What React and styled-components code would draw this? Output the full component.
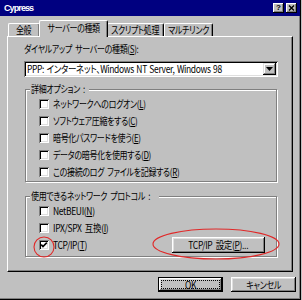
import React from "react";
import styled, { createGlobalStyle } from "styled-components";

const GlobalStyle = createGlobalStyle`
  html, body {
    margin: 0;
    padding: 0;
    background: #c0c0c0;
  }
  body {
    font-family: "Noto Sans CJK JP", "Noto Sans", sans-serif;
    font-size: 10px;
    font-feature-settings: "palt";
    letter-spacing: -0.4px;
    word-spacing: 2px;
    color: #000;
  }
`;

const Window = styled.div`
  position: relative;
  width: 301px;
  height: 300px;
  box-sizing: border-box;
  background: #c0c0c0;
  border-right: 1px solid #000;
  border-bottom: 1px solid #000;
  box-shadow: inset -1px -1px #808080;
  display: flex;
  flex-direction: column;
  overflow: hidden;
`;

const TitleBar = styled.div`
  height: 16px;
  flex: none;
  background: #000080;
  color: #fff;
  display: flex;
  align-items: center;
  justify-content: space-between;
  padding: 0 3px 0 4px;
`;

const TitleText = styled.span`
  font-family: "Liberation Sans", Arial, sans-serif;
  font-weight: bold;
  font-size: 9px;
  letter-spacing: -0.9px;
`;

const TitleButtons = styled.div`
  display: flex;
  gap: 2px;
`;

const TitleButton = styled.div`
  width: 11px;
  height: 10px;
  box-sizing: border-box;
  background: #c0c0c0;
  box-shadow: inset -1px -1px #000, inset 1px 1px #fff, inset -2px -2px #808080;
  color: #000;
  display: flex;
  align-items: center;
  justify-content: center;
  font-family: "Liberation Sans", Arial, sans-serif;
  font-weight: bold;
  font-size: 8px;
  line-height: 1;
  letter-spacing: 0;
`;

// MS UI Gothic in the shot is narrower than Noto; squeeze each run of text.
const Txt = styled.span`
  display: inline-block;
  white-space: nowrap;
  transform: scaleX(${(p) => p.$s || 0.8});
  transform-origin: ${(p) => (p.$center ? "center" : "left")} center;
  margin-right: ${(p) => p.$trim || 0}px;
`;

const TabRow = styled.div`
  flex: none;
  display: flex;
  align-items: flex-end;
  height: 16px;
  margin-top: 4px;
  padding-left: 8px;
`;

const Tab = styled.div`
  position: relative;
  z-index: ${(p) => (p.$active ? 2 : 1)};
  width: ${(p) => p.$w}px;
  height: ${(p) => (p.$active ? 17 : 13)}px;
  margin: 0 ${(p) => (p.$active ? -1 : 0)}px ${(p) => (p.$active ? -1 : 0)}px;
  box-sizing: border-box;
  background: #c0c0c0;
  border-top: 1px solid #fff;
  border-left: 1px solid #fff;
  border-right: 1px solid #000;
  border-radius: 2px 2px 0 0;
  box-shadow: inset -1px 0 #808080;
  display: flex;
  align-items: ${(p) => (p.$active ? "flex-start" : "center")};
  padding-top: ${(p) => (p.$active ? 1 : 0)}px;
  justify-content: center;
  line-height: 12px;
  white-space: nowrap;
`;

const Panel = styled.div`
  flex: none;
  height: 236px;
  margin: 0 7px 0 7px;
  box-sizing: border-box;
  border-top: 1px solid #fff;
  border-left: 1px solid #fff;
  border-right: 1px solid #000;
  border-bottom: 1px solid #000;
  box-shadow: inset -1px -1px #808080;
  padding: 6px 0 0 16px;
`;

const FieldLabel = styled.div`
  line-height: 12px;
  white-space: nowrap;
`;

const Select = styled.div`
  margin-top: 6px;
  width: 254px;
  height: 16px;
  box-sizing: border-box;
  background: #fff;
  box-shadow: inset 1px 1px #808080, inset -1px -1px #fff, inset 2px 2px #000,
    inset -2px -2px #dfdfdf;
  display: flex;
  align-items: center;
  padding: 2px 2px 2px 3px;
  white-space: nowrap;
  line-height: 12px;
`;

const SelectText = styled.span`
  flex: 1;
  min-width: 0;
  word-spacing: 1px;
`;

const ArrowButton = styled.div`
  flex: none;
  width: 13px;
  height: 12px;
  box-sizing: border-box;
  background: #c0c0c0;
  box-shadow: inset -1px -1px #000, inset 1px 1px #dfdfdf, inset -2px -2px #808080,
    inset 2px 2px #fff;
  display: flex;
  align-items: center;
  justify-content: center;
`;

const Group = styled.fieldset`
  margin: ${(p) => p.$mt}px 0 0 1px;
  width: 252px;
  box-sizing: border-box;
  border: 1px solid #808080;
  box-shadow: inset 1px 1px #fff, 1px 1px #fff;
  padding: 0 0 ${(p) => p.$pb}px 0;
  min-width: 0;
`;

const Legend = styled.legend`
  margin-left: 4px;
  padding: 0 1px;
  line-height: 12px;
  background: #c0c0c0;
  white-space: nowrap;
`;

const CheckRow = styled.div`
  display: flex;
  align-items: center;
  height: 17px;
  padding: 0 11px 0 13px;
  gap: 4px;
  line-height: 12px;
  white-space: nowrap;
`;

const Box = styled.span`
  flex: none;
  width: 10px;
  height: 10px;
  box-sizing: border-box;
  background: #fff;
  box-shadow: inset 1px 1px #808080, inset -1px -1px #fff, inset 2px 2px #000,
    inset -2px -2px #dfdfdf;
  display: flex;
  align-items: center;
  justify-content: center;
`;

const Key = styled.u`
  text-decoration: underline;
  text-underline-offset: 1px;
`;

const Button = styled.div`
  width: ${(p) => p.$w}px;
  height: ${(p) => p.$h}px;
  margin-left: ${(p) => (p.$push ? "auto" : "0")};
  box-sizing: border-box;
  background: #c0c0c0;
  border: ${(p) => (p.$default ? "1px solid #000" : "none")};
  box-shadow: inset -1px -1px #000, inset 1px 1px #fff, inset -2px -2px #808080,
    inset 2px 2px #dfdfdf;
  outline: ${(p) => (p.$default ? "1px dotted #000" : "none")};
  outline-offset: -4px;
  display: flex;
  align-items: center;
  justify-content: center;
  line-height: 12px;
  white-space: nowrap;
`;

const ButtonRow = styled.div`
  display: flex;
  justify-content: flex-end;
  gap: 8px;
  margin-top: 5px;
  padding-right: 4px;
`;

const Mark = styled.svg`
  position: absolute;
  left: ${(p) => p.$x}px;
  top: ${(p) => p.$y}px;
  overflow: visible;
  pointer-events: none;
`;

const Check = ({ checked }) => (
  <Box>
    {checked && (
      <svg width="8" height="8" viewBox="0 0 8 8">
        <path d="M1.2 3.6 L3 5.6 L6.8 1.6" fill="none" stroke="#000" strokeWidth="1.6" />
      </svg>
    )}
  </Box>
);

const CheckItem = ({ checked, children, extra, s }) => (
  <CheckRow>
    <Check checked={checked} />
    <Txt $s={s}>{children}</Txt>
    {extra}
  </CheckRow>
);

export default function App() {
  return (
    <>
      <GlobalStyle />
      <Window>
        <TitleBar>
          <TitleText>Cypress</TitleText>
          <TitleButtons>
            <TitleButton>?</TitleButton>
            <TitleButton>
              <svg width="7" height="6" viewBox="0 0 7 6">
                <path d="M1 0.5 L6 5.5 M6 0.5 L1 5.5" stroke="#000" strokeWidth="1.4" />
              </svg>
            </TitleButton>
          </TitleButtons>
        </TitleBar>

        <TabRow>
          <Tab $w={32}>
            <Txt $center>全般</Txt>
          </Tab>
          <Tab $w={69} $active>
            <Txt $center>サーバーの種類</Txt>
          </Tab>
          <Tab $w={57}>
            <Txt $center>スクリプト処理</Txt>
          </Tab>
          <Tab $w={49}>
            <Txt $center>マルチリンク</Txt>
          </Tab>
        </TabRow>

        <Panel>
          <FieldLabel>
            <Txt>
              ダイヤルアップ サーバーの種類(<Key>S</Key>):
            </Txt>
          </FieldLabel>
          <Select>
            <SelectText>
              <Txt $s={0.85}>PPP: インターネット、Windows NT Server, Windows 98</Txt>
            </SelectText>
            <ArrowButton>
              <svg width="7" height="4" viewBox="0 0 7 4">
                <path d="M0 0 H7 L3.5 4 Z" fill="#000" />
              </svg>
            </ArrowButton>
          </Select>

          <Group $mt={6} $pb={1}>
            <Legend>
              <Txt $trim={-10}>詳細オプション :</Txt>
            </Legend>
            <CheckItem>
              ネットワークへのログオン(<Key>L</Key>)
            </CheckItem>
            <CheckItem>
              ソフトウェア圧縮をする(<Key>C</Key>)
            </CheckItem>
            <CheckItem>
              暗号化パスワードを使う(<Key>E</Key>)
            </CheckItem>
            <CheckItem>
              データの暗号化を使用する(<Key>D</Key>)
            </CheckItem>
            <CheckItem>
              この接続のログ ファイルを記録する(<Key>R</Key>)
            </CheckItem>
          </Group>

          <Group $mt={8} $pb={3}>
            <Legend>
              <Txt $trim={-22}>使用できるネットワーク プロトコル :</Txt>
            </Legend>
            <CheckItem s={0.85}>
              NetBEUI(<Key>N</Key>)
            </CheckItem>
            <CheckItem s={0.85}>
              IPX/SPX 互換(<Key>I</Key>)
            </CheckItem>
            <CheckItem
              checked
              s={0.85}
              extra={
                <Button $w={93} $h={16} $push>
                  <Txt $center $s={0.85}>
                    TCP/IP 設定(<Key>P</Key>)...
                  </Txt>
                </Button>
              }
            >
              TCP/IP(<Key>T</Key>)
            </CheckItem>
          </Group>
        </Panel>

        <ButtonRow>
          <Button $w={65} $h={15} $default>
            <Txt $center $s={0.85}>OK</Txt>
          </Button>
          <Button $w={65} $h={15}>
            <Txt $center>キャンセル</Txt>
          </Button>
        </ButtonRow>

        <Mark $x={152} $y={228} width="128" height="32" viewBox="0 0 128 32">
          <ellipse cx="64" cy="16" rx="63" ry="15" fill="none" stroke="#e02828" strokeWidth="1.1" />
        </Mark>
        <Mark $x={33} $y={236} width="22" height="22" viewBox="0 0 22 22">
          <circle cx="11" cy="11" r="10" fill="none" stroke="#e02828" strokeWidth="1.1" />
        </Mark>
      </Window>
    </>
  );
}
